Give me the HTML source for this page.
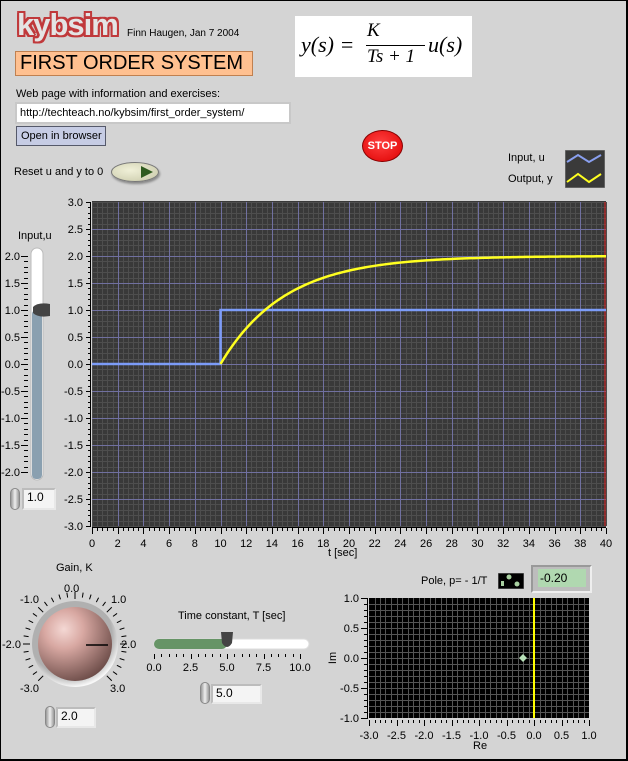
<!DOCTYPE html>
<html><head><meta charset="utf-8">
<style>
*{margin:0;padding:0;box-sizing:border-box}
body{width:628px;height:761px;background:#d4d4d4;font-family:"Liberation Sans",sans-serif;font-size:11px;color:#000;position:relative;overflow:hidden}
.frame{position:absolute;left:0;top:0;width:628px;height:761px;border:1px solid #000;border-right:2px solid #000;border-bottom:2px solid #000}
.a{position:absolute;white-space:nowrap}
.num{position:absolute;background:#f4f4f4;border:2px solid #bcbcbc;border-right-color:#e8e8e8;border-bottom-color:#e8e8e8;font-size:12px;padding-left:3px;line-height:15px}
.spin{position:absolute;width:10px;height:22px;border-radius:5px;background:linear-gradient(90deg,#999,#eee,#999);border:1px solid #888}
</style></head><body>
<div class="frame"></div>

<div class="a" style="left:17px;top:8px;font-family:'Liberation Sans',sans-serif;font-weight:bold;font-size:31px;color:#e4e4e4;letter-spacing:-1px;line-height:34px;text-shadow:2px 0 #c0393b,-2px 0 #c0393b,0 2px #c0393b,0 -2px #c0393b,2px 2px #c0393b,-2px -2px #c0393b,2px -2px #c0393b,-2px 2px #c0393b">kybsim</div>
<div class="a" style="left:127px;top:28px;font-size:10px">Finn Haugen, Jan 7 2004</div>
<div class="a" style="left:15px;top:51px;width:238px;height:25px;background:#ffc090;border:1px solid #c08050;font-size:20px;line-height:23px;padding-left:4px">FIRST ORDER SYSTEM</div>
<div class="a" style="left:16px;top:88px;font-size:11px">Web page with information and exercises:</div>
<div class="a" style="left:15px;top:102px;width:276px;height:22px;background:#fff;border:2px solid #c8c8c8;font-size:11px;line-height:18px;padding-left:3px">http://techteach.no/kybsim/first_order_system/</div>
<div class="a" style="left:16px;top:126px;width:90px;height:20px;background:#c6cce4;border:1px solid #55596a;font-size:11px;line-height:18px;padding-left:4px">Open in browser</div>
<div class="a" style="left:14px;top:166px">Reset u and y to 0</div>
<div class="a" style="left:111px;top:162px;width:48px;height:20px;border-radius:50%;background:radial-gradient(ellipse at 40% 40%,#f0f0d8,#c8c8a8);border:1px solid #777;box-shadow:1px 2px 2px #888"></div>
<svg class="a" style="left:140px;top:166px" width="14" height="12"><polygon points="1,0 13,6 1,12" fill="#2e5a1e"/></svg>

<div class="a" style="left:295px;top:16px;width:177px;height:61px;background:#fff"></div>
<div class="a" style="left:301px;top:32px;font-family:'Liberation Serif',serif;font-size:22px;font-style:italic">y(s) =</div>
<div class="a" style="left:367px;top:20px;font-family:'Liberation Serif',serif;font-size:19px;font-style:italic">K</div>
<div class="a" style="left:366px;top:45px;width:59px;height:1px;background:#000"></div>
<div class="a" style="left:367px;top:46px;font-family:'Liberation Serif',serif;font-size:19px;font-style:italic">Ts + 1</div>
<div class="a" style="left:428px;top:32px;font-family:'Liberation Serif',serif;font-size:22px;font-style:italic">u(s)</div>

<div class="a" style="left:362px;top:130px;width:41px;height:32px;border-radius:50%;background:radial-gradient(ellipse at 45% 40%,#ff4040,#dd0000);border:1px solid #800;color:#fff;font-weight:bold;font-size:11px;text-align:center;line-height:30px">STOP</div>

<div class="a" style="left:508px;top:152px">Input, u</div>
<div class="a" style="left:508px;top:173px">Output, y</div>
<svg class="a" style="left:565px;top:150px" width="40" height="38"><rect width="40" height="38" fill="#3a3a3a" stroke="#888"/><polyline points="2,12 13,5 24,12 36,5" fill="none" stroke="#8aa0f0" stroke-width="2"/><polyline points="2,32 13,24 24,32 36,24" fill="none" stroke="#ffff20" stroke-width="2"/></svg>

<div class="a" style="left:18px;top:230px;font-size:11px">Input,u</div>

<svg id="main" class="a" style="left:0;top:190px" width="628" height="370"></svg>
<div class="a" style="left:328px;top:547px">t [sec]</div>

<div class="num" style="left:22px;top:488px;width:34px;height:22px">1.0</div>
<div class="spin" style="left:10px;top:488px"></div>

<div class="a" style="left:56px;top:562px">Gain, K</div>
<svg id="knob" class="a" style="left:0;top:580px" width="140" height="130"></svg>
<div class="num" style="left:56px;top:707px;width:40px;height:21px">2.0</div>
<div class="spin" style="left:45px;top:706px"></div>

<div class="a" style="left:178px;top:610px">Time constant, T [sec]</div>
<svg id="sl" class="a" style="left:145px;top:625px" width="175" height="50"></svg>
<div class="num" style="left:211px;top:684px;width:51px;height:20px">5.0</div>
<div class="spin" style="left:200px;top:682px"></div>

<div class="a" style="left:421px;top:575px">Pole, p= - 1/T</div>
<svg class="a" style="left:498px;top:573px" width="26" height="16"><rect width="26" height="16" fill="#000" stroke="#777"/><circle cx="11" cy="4" r="2.5" fill="#a8d0a0"/><circle cx="19" cy="11" r="2.5" fill="#a8d0a0"/><rect x="3" y="8" width="3" height="5" fill="#a8d0a0"/></svg>
<div class="a" style="left:531px;top:565px;width:61px;height:28px;background:#bdbdbd;border:2px solid #999;border-right-color:#eee;border-bottom-color:#eee"></div>
<div class="a" style="left:538px;top:569px;width:48px;height:18px;background:#b0d8b0;font-size:12px;line-height:18px;padding-left:2px">-0.20</div>
<svg id="pole" class="a" style="left:320px;top:590px" width="308" height="165"></svg>
<div class="a" style="left:473px;top:740px">Re</div>

<script>
const NS="http://www.w3.org/2000/svg";
function el(p,t,a,txt){const e=document.createElementNS(NS,t);for(const k in a)e.setAttribute(k,a[k]);if(txt!==undefined)e.textContent=txt;p.appendChild(e);return e}
const F='font-family:"Liberation Sans",sans-serif;font-size:11px';
const m=document.getElementById('main');
const X0=92,X1=606,Y0=12,Y1=336;
const px=t=>X0+(X1-X0)*t/40, py=v=>Y0+(3-v)*(Y1-Y0)/6;
el(m,'rect',{x:X0,y:Y0-1,width:X1-X0,height:Y1-Y0+1,fill:'#393939'});
for(let t=0;t<=40;t+=0.4){const x=Math.round(px(t))+.5;el(m,'line',{x1:x,x2:x,y1:Y0,y2:Y1,stroke:'#4e4e4e'})}
for(let v=-3;v<=3.001;v+=0.1){const y=Math.round(py(v))+.5;el(m,'line',{x1:X0,x2:X1,y1:y,y2:y,stroke:'#4e4e4e'})}
for(let t=2;t<40;t+=2){const x=Math.round(px(t))+.5;el(m,'line',{x1:x,x2:x,y1:Y0,y2:Y1,stroke:'#7070a0'})}
for(let v=-2.5;v<3;v+=0.5){const y=Math.round(py(v))+.5;el(m,'line',{x1:X0,x2:X1,y1:y,y2:y,stroke:'#7070a0'})}
el(m,'line',{x1:X1-1,x2:X1-1,y1:Y0,y2:Y1,stroke:'#e02020'});
for(let v=-3;v<=3.001;v+=0.1){const y=Math.round(py(v))+.5;const maj=Math.abs(v*2-Math.round(v*2))<1e-6;el(m,'line',{x1:maj?X0-6:X0-4,x2:X0-1,y1:y,y2:y,stroke:'#000'})}
el(m,'line',{x1:X0-1.5,x2:X0-1.5,y1:Y0,y2:Y1,stroke:'#000'});
for(let v=-3;v<=3.001;v+=0.5){el(m,'text',{x:X0-9,y:py(v)+4,'text-anchor':'end',style:F},v.toFixed(1))}
el(m,'line',{x1:X0,x2:X1,y1:Y1+1.5,y2:Y1+1.5,stroke:'#000'});
for(let t=0;t<=40;t+=0.4){const x=Math.round(px(t))+.5;const maj=Math.abs(t/2-Math.round(t/2))<1e-6;el(m,'line',{x1:x,x2:x,y1:Y1+2,y2:maj?Y1+8:Y1+5,stroke:'#000'})}
for(let t=0;t<=40;t+=2)el(m,'text',{x:px(t),y:Y1+21,'text-anchor':'middle',style:F},t);
el(m,'polyline',{points:`${X0},${py(0)} ${px(10)},${py(0)} ${px(10)},${py(1)} ${X1},${py(1)}`,fill:'none',stroke:'#7c9cf8','stroke-width':2.5});
let pts=[];for(let t=10;t<=40;t+=0.25)pts.push(px(t)+','+py(2*(1-Math.exp(-(t-10)/5))));
el(m,'polyline',{points:pts.join(' '),fill:'none',stroke:'#ffff20','stroke-width':2.5});
const sy=v=>Y0+54+(2-v)*54;
el(m,'rect',{x:31,y:sy(2)-8,width:12,height:(sy(-2)-sy(2))+16,rx:6,fill:'#fff',stroke:'#bbb'});
el(m,'rect',{x:32,y:sy(1),width:10,height:sy(-2)-sy(1)+7,rx:4,fill:'#8aa0b0'});
for(let v=-2;v<=2.001;v+=0.1){const y=Math.round(sy(v))+.5;const maj=Math.abs(v*2-Math.round(v*2))<1e-6;el(m,'line',{x1:maj?21:24,x2:28,y1:y,y2:y,stroke:'#000'})}
for(let v=-2;v<=2.001;v+=0.5)el(m,'text',{x:20,y:sy(v)+4,'text-anchor':'end',style:F},v.toFixed(1));
el(m,'path',{d:`M33,${sy(1)-3} Q38,${sy(1)-8} 50,${sy(1)-6} L50,${sy(1)+6} Q38,${sy(1)+8} 33,${sy(1)+3}Z`,fill:'#444'});
const k=document.getElementById('knob');const cx=75,cy=64;
const dg=el(k,'defs',{});
dg.innerHTML='<radialGradient id="kg" cx="35%" cy="30%" r="75%"><stop offset="0" stop-color="#f4d8d4"/><stop offset="0.35" stop-color="#d8a8a2"/><stop offset="1" stop-color="#6c4c48"/></radialGradient><radialGradient id="bz" cx="45%" cy="40%" r="60%"><stop offset="0.8" stop-color="#b0b0b0"/><stop offset="1" stop-color="#f8f8f8"/></radialGradient>';
el(k,'circle',{cx,cy,r:43,fill:'url(#bz)'});
el(k,'circle',{cx,cy,r:37,fill:'url(#kg)'});
el(k,'line',{x1:86,x2:108,y1:cy+1,y2:cy+1,stroke:'#000','stroke-width':1.5});
for(let i=0;i<=30;i++){const v=-3+i*0.2;const a=(v/2)*90*Math.PI/180;const maj=i%5==0;const r1=maj?45:47,r2=52;
el(k,'line',{x1:cx+r1*Math.sin(a),y1:cy-r1*Math.cos(a),x2:cx+r2*Math.sin(a),y2:cy-r2*Math.cos(a),stroke:'#000'})}
[[-3,20,112],[-2,2,cy+4],[-1,20,23],[0,64,12],[1,111,23],[2,121,cy+4],[3,110,112]].forEach(([v,x,y])=>el(k,'text',{x,y,style:F},v.toFixed(1)));
const s=document.getElementById('sl');const hx=v=>9+v*14.6;
el(s,'rect',{x:9,y:14,width:155,height:10,rx:5,fill:'#fff',stroke:'#ddd'});
el(s,'rect',{x:9,y:14,width:hx(5)-9,height:10,rx:5,fill:'#669466'});
el(s,'path',{d:`M${hx(5)-6},7 L${hx(5)+6},7 L${hx(5)+5},18 Q${hx(5)},26 ${hx(5)-5},18Z`,fill:'#444'});
for(let i=0;i<=20;i++){const x=Math.round(hx(i*0.5))+.5;el(s,'line',{x1:x,x2:x,y1:29,y2:i%5==0?34:32,stroke:'#000'})}
for(let v=0;v<=10;v+=2.5)el(s,'text',{x:hx(v),y:46,'text-anchor':'middle',style:F},v.toFixed(1));
const p=document.getElementById('pole');const PX0=49,PX1=269,PY0=8,PY1=128;
const qx=r=>PX0+(r+3)*(PX1-PX0)/4,qy=i=>PY0+(1-i)*(PY1-PY0)/2;
el(p,'rect',{x:PX0,y:PY0,width:PX1-PX0,height:PY1-PY0,fill:'#000'});
for(let i=1;i<40;i++){const x=Math.round(qx(-3+i*0.1))+.5;el(p,'line',{x1:x,x2:x,y1:PY0,y2:PY1,stroke:'#555'})}
for(let i=1;i<20;i++){const y=Math.round(qy(-1+i*0.1))+.5;el(p,'line',{x1:PX0,x2:PX1,y1:y,y2:y,stroke:'#555'})}
el(p,'line',{x1:qx(0),x2:qx(0),y1:PY0,y2:PY1,stroke:'#ffff00','stroke-width':2});
el(p,'path',{d:`M${qx(-0.2)},${qy(0)-4} l4,4 l-4,4 l-4,-4z`,fill:'#b8e0b8'});
el(p,'line',{x1:PX0-1.5,x2:PX0-1.5,y1:PY0,y2:PY1,stroke:'#000'});
for(let i=0;i<=20;i++){const y=Math.round(qy(-1+i*0.1))+.5;el(p,'line',{x1:i%5==0?PX0-8:PX0-5,x2:PX0-1,y1:y,y2:y,stroke:'#000'})}
for(let v=-1;v<=1.001;v+=0.5)el(p,'text',{x:PX0-10,y:qy(v)+4,'text-anchor':'end',style:F},v.toFixed(1));
for(let i=0;i<=40;i++){const x=Math.round(qx(-3+i*0.1))+.5;el(p,'line',{x1:x,x2:x,y1:PY1+2,y2:i%5==0?PY1+8:PY1+5,stroke:'#000'})}
for(let v=-3;v<=1.001;v+=0.5)el(p,'text',{x:qx(v),y:PY1+21,'text-anchor':'middle',style:F},v.toFixed(1));
el(p,'text',{x:0,y:0,transform:`translate(16,${qy(0)}) rotate(-90)`,'text-anchor':'middle',style:F},'Im');
</script>
</body></html>
